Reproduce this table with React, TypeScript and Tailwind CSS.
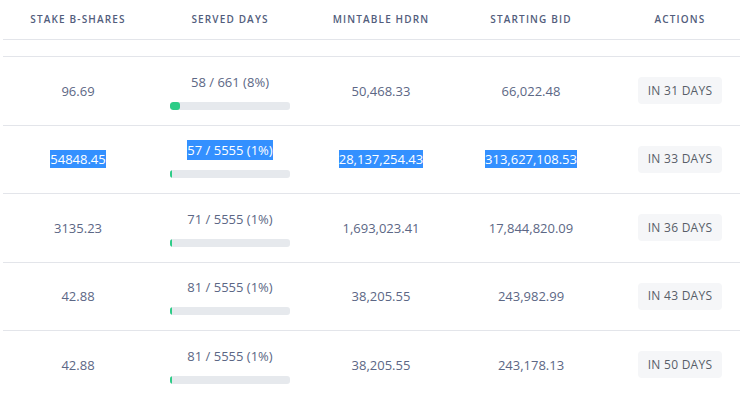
import React from 'react'

type Row = {
  shares: string
  served: number
  total: number
  pct: number
  mintable: string
  bid: string
  days: number
  selected?: boolean
}

const rows: Row[] = [
  { shares: '96.69', served: 58, total: 661, pct: 8, mintable: '50,468.33', bid: '66,022.48', days: 31 },
  { shares: '54848.45', served: 57, total: 5555, pct: 1, mintable: '28,137,254.43', bid: '313,627,108.53', days: 33, selected: true },
  { shares: '3135.23', served: 71, total: 5555, pct: 1, mintable: '1,693,023.41', bid: '17,844,820.09', days: 36 },
  { shares: '42.88', served: 81, total: 5555, pct: 1, mintable: '38,205.55', bid: '243,982.99', days: 43 },
  { shares: '42.88', served: 81, total: 5555, pct: 1, mintable: '38,205.55', bid: '243,178.13', days: 50 },
]

const cols = 'grid grid-cols-[150px_154px_148px_152px_146px]'

function Sel({ on, children }: { on?: boolean; children: React.ReactNode }) {
  return <span className={on ? 'bg-[#3390ff] text-white' : ''}>{children}</span>
}

export default function App() {
  return (
    <div className="w-[740px] h-[399px] overflow-hidden bg-white font-['Open_Sans',sans-serif]">
      <div className="ml-[3px] w-[750px]">
        {/* header */}
        <div className={`${cols} h-[40px] items-center border-b border-[#e3e5ea] text-[10px] font-semibold tracking-[1.15px] uppercase text-[#525d7c]`}>
          <div className="text-center pb-[1px]">Stake B-Shares</div>
          <div className="text-center pb-[1px]">Served Days</div>
          <div className="text-center pb-[1px]">Mintable HDRN</div>
          <div className="text-center pb-[1px]">Starting Bid</div>
          <div className="text-center pb-[1px]">Actions</div>
        </div>
        <div className="h-[17px] border-b border-[#e3e5ea]" />

        {rows.map((r, i) => (
          <div
            key={i}
            className={`${cols} h-[68.5px] items-center border-b border-[#e3e5ea] text-[13px] leading-[20px] text-[#5c6785]`}
          >
            <div className="text-center">
              <Sel on={r.selected}>{r.shares}</Sel>
            </div>
            <div className="flex flex-col items-center gap-[10px]">
              <Sel on={r.selected}>
                {r.served} / {r.total} ({r.pct}%)
              </Sel>
              <div className="w-[120px] h-[8px] rounded-[3px] bg-[#e6e9ed] overflow-hidden">
                <div className="h-full rounded-[3px] bg-[#2dcc87]" style={{ width: `${Math.max(r.pct * 1.25, 1.5)}px` }} />
              </div>
            </div>
            <div className="text-center">
              <Sel on={r.selected}>{r.mintable}</Sel>
            </div>
            <div className="text-center">
              <Sel on={r.selected}>{r.bid}</Sel>
            </div>
            <div className="flex justify-center">
              <button className="h-[27px] px-[10px] rounded-[4px] bg-[#f5f6f8] text-[12px] font-medium tracking-[0.25px] text-[#585e68] uppercase">
                In {r.days} Days
              </button>
            </div>
          </div>
        ))}
      </div>
    </div>
  )
}
